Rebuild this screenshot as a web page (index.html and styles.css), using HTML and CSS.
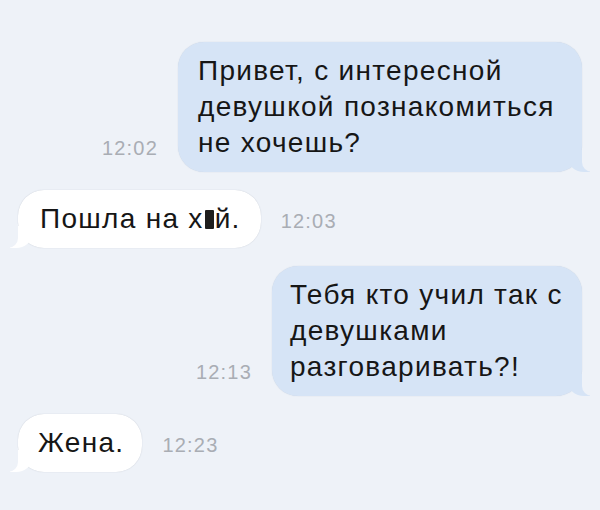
FILE: index.html
```html
<!DOCTYPE html>
<html lang="ru">
<head>
<meta charset="utf-8">
<link rel="stylesheet" href="styles.css">
</head>
<body>
<div class="chat">
  <div class="row out">
    <span class="time">12:02</span>
    <div class="bubble bubble-out b1">Привет, с интересной девушкой познакомиться не хочешь?</div>
  </div>
  <div class="row in">
    <div class="bubble bubble-in b2">Пошла на х<span class="censor"></span>й.</div>
    <span class="time">12:03</span>
  </div>
  <div class="row out">
    <span class="time">12:13</span>
    <div class="bubble bubble-out b3">Тебя кто учил так с девушками разговаривать?!</div>
  </div>
  <div class="row in">
    <div class="bubble bubble-in b4">Жена.</div>
    <span class="time">12:23</span>
  </div>
</div>
</body>
</html>
```
FILE: styles.css
```css
html, body {
  margin: 0;
  padding: 0;
}
body {
  width: 600px;
  height: 510px;
  overflow: hidden;
  background: #eef2f8;
  font-family: "Liberation Sans", Arial, sans-serif;
  color: #161616;
}
.chat {
  display: flex;
  flex-direction: column;
  gap: 18px;
  padding: 42px 18px 0 18px;
}
.row {
  display: flex;
  align-items: flex-end;
  gap: 20px;
}
.row.out {
  justify-content: flex-end;
}
.time {
  font-size: 20px;
  line-height: 20px;
  letter-spacing: 1.2px;
  color: #a9adb4;
}
.row.out .time {
  padding-bottom: 14px;
}
.row.in .time {
  padding-bottom: 17px;
}
.bubble {
  position: relative;
  font-size: 28px;
  line-height: 36px;
  letter-spacing: 1.3px;
  border-radius: 26px;
  box-sizing: border-box;
}
.bubble-out {
  background: #d6e4f6;
  box-shadow: 0 0 1px rgba(120, 140, 170, 0.35);
}
.bubble-in {
  background: #ffffff;
  box-shadow: 0 0 1px rgba(120, 130, 150, 0.45);
}
.bubble-out::before {
  content: "";
  position: absolute;
  bottom: 0;
  right: -8px;
  width: 22px;
  height: 22px;
  background: #d6e4f6;
  border-bottom-left-radius: 16px 14px;
}
.bubble-out::after {
  content: "";
  position: absolute;
  bottom: 0;
  right: -12px;
  width: 12px;
  height: 24px;
  background: #eef2f8;
  border-bottom-left-radius: 10px;
}
.bubble-in::before {
  content: "";
  position: absolute;
  bottom: 0;
  left: -8px;
  width: 22px;
  height: 22px;
  background: #ffffff;
  border-bottom-right-radius: 16px 14px;
}
.bubble-in::after {
  content: "";
  position: absolute;
  bottom: 0;
  left: -12px;
  width: 12px;
  height: 24px;
  background: #eef2f8;
  border-bottom-right-radius: 10px;
}
.b1 {
  width: 404px;
  padding: 11px 18px 11px 20px;
}
.b2 {
  padding: 11px 20px 11px 22px;
}
.b3 {
  width: 310px;
  padding: 11px 12px 11px 18px;
}
.b4 {
  padding: 11px 18px 11px 20px;
}
.censor {
  display: inline-block;
  width: 9px;
  height: 19px;
  margin: 0 1px;
  background: #1e1e1e;
  border-radius: 1px;
  vertical-align: -1px;
}
```
